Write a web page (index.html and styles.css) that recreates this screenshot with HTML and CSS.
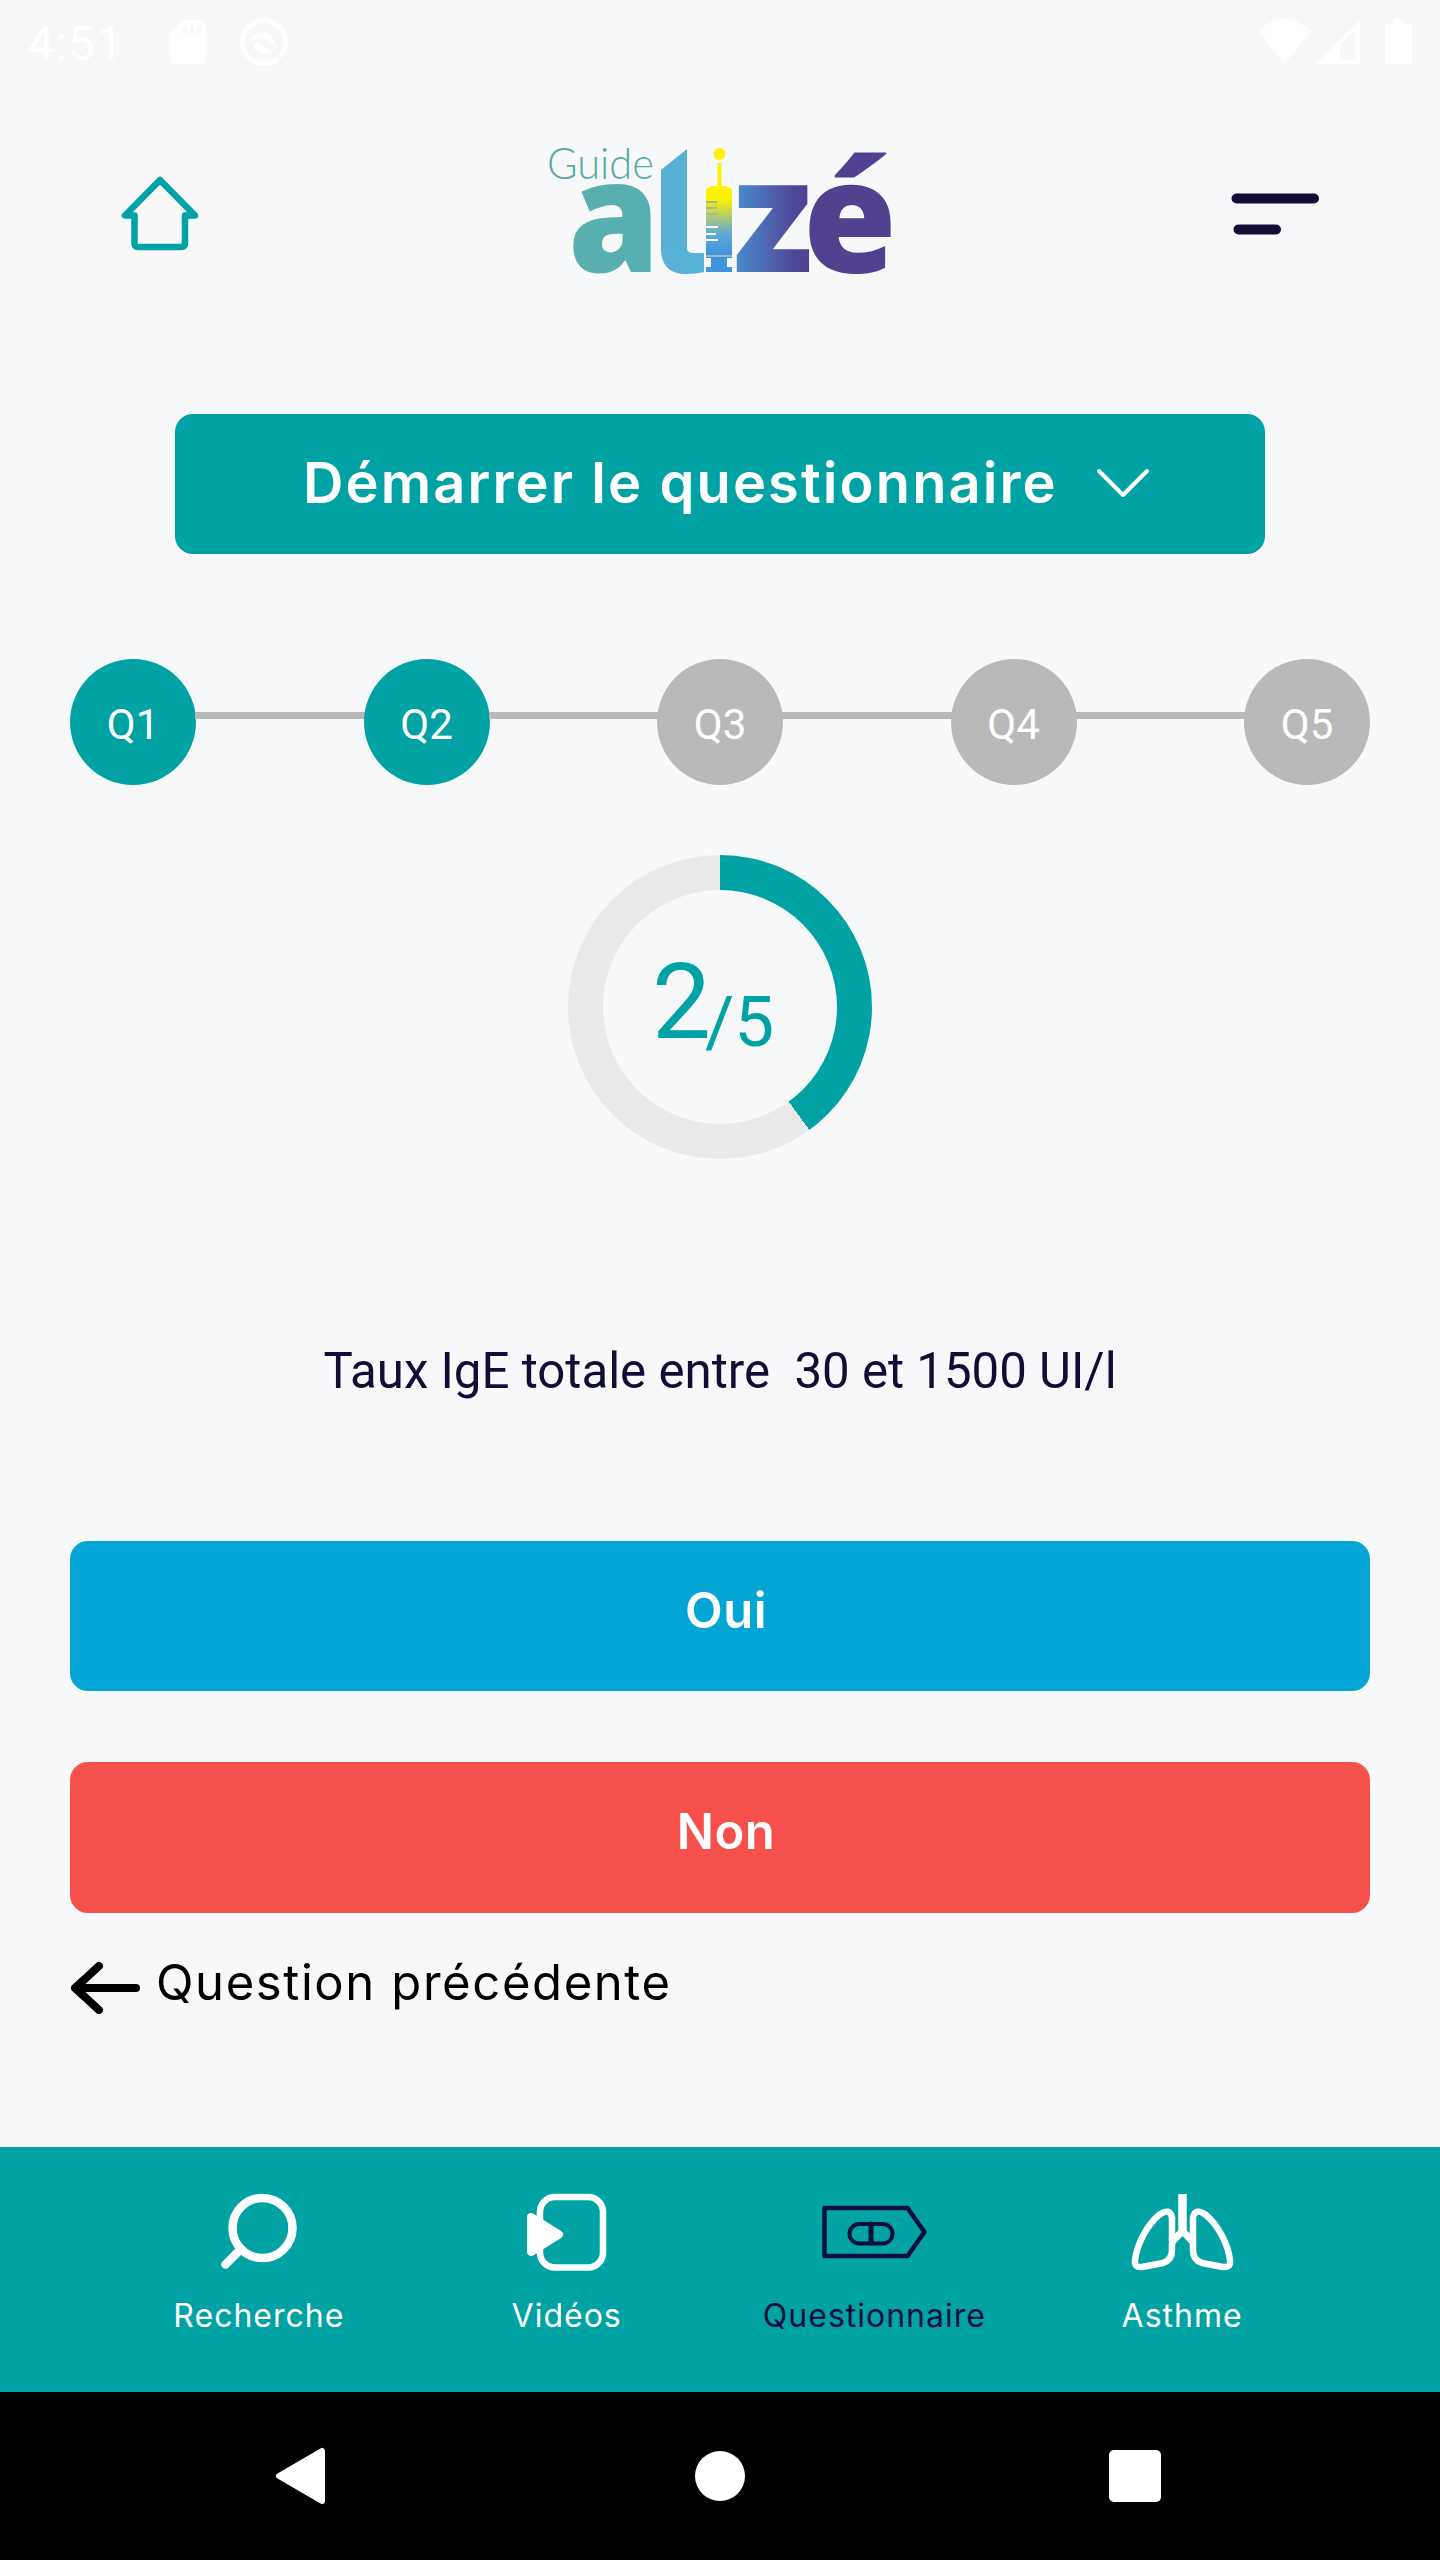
FILE: index.html
```html
<!DOCTYPE html>
<html lang="fr">

<head>
    <meta charset="UTF-8">
    <title>Guide Alizé</title>
    <link rel="stylesheet" href="styles.css">
</head>

<body>
    <div class="statusbar">
        <span class="heure">4:51</span>
        <svg class="iconSd" width="36" height="44" viewBox="0 0 36 44">
            <path fill="#fff" d="M13 0H31Q36 0 36 5V39Q36 44 31 44H5Q0 44 0 39V12Z" />
            <path stroke="#f7f8fa" stroke-width="4" d="M15 5V13M22 5V13M29 5V13" />
        </svg>
        <svg class="iconSync" width="50" height="50" viewBox="0 0 50 50">
            <circle cx="25" cy="25" r="21.5" fill="none" stroke="#fff" stroke-width="5" />
            <path fill="#fff" d="M12 21A14 14 0 0 1 37 31L26 23Q19 18 12 25ZM14 27Q18 23 23 27L33 36A14 14 0 0 1 14 27Z" />
            <path stroke="#f7f8fa" stroke-width="3" d="M36 38L43 44" />
        </svg>
        <svg class="iconReseau" width="155" height="46" viewBox="0 0 155 46">
            <path fill="#fff" d="M0 12Q26 -12 53 12L26.5 45Z" />
            <path fill="#fff" fill-rule="evenodd" d="M57 45L102 1V45ZM82 26V41H97V12Z" />
            <path fill="#fff" d="M135 0H146V5H154V45H127V5H135Z" />
        </svg>
    </div>

    <header class="header">
        <svg class="iconHome" width="80" height="76" viewBox="0 0 80 76">
            <path d="M40 4L5 39.5H14.5V67Q14.5 71 18 71H61Q65 71 65 67V39.5H75Z" />
        </svg>
        <svg class="logo" width="350" height="140" viewBox="0 0 350 140">
            <defs>
                <linearGradient id="degradeA"><stop offset="0" stop-color="#59b0ad" /><stop offset="1" stop-color="#58afb3" /></linearGradient>
                <linearGradient id="degradeZ"><stop offset="0" stop-color="#4a8fd0" /><stop offset="0.75" stop-color="#50489a" /><stop offset="1" stop-color="#51418f" /></linearGradient>
                <linearGradient id="degradeI" x1="0" y1="0" x2="0" y2="1"><stop offset="0.15" stop-color="#fff200" /><stop offset="0.55" stop-color="#62a9d6" /><stop offset="0.8" stop-color="#3e94df" /></linearGradient>
                <clipPath id="coupeL"><path d="M117 30L143 9V110H117Z" /></clipPath>
            </defs>
            <text class="logoGuide" x="3" y="39" textLength="107" lengthAdjust="spacingAndGlyphs">Guide</text>
            <text class="logoLettre" x="24" y="132" textLength="92" lengthAdjust="spacingAndGlyphs" fill="url(#degradeA)">a</text>
            <g clip-path="url(#coupeL)"><text class="logoLettre logoL" x="101" y="136" textLength="58" lengthAdjust="spacingAndGlyphs" fill="#58b1d4">l</text></g>
            <path fill="#58b1d8" d="M117 108H143Q143 113 149 113H160V132Q152 134 142 134Q117 134 117 108Z" />
            <circle cx="175.500" cy="14" r="6" fill="#fff200" />
            <path fill="#fff200" d="M173.500 23H177.500V46H173.500Z" />
            <path fill="url(#degradeI)" d="M162 49L168 46H182L188 49V118H183V127H188V132H162V127H167V118H162Z" />
            <path stroke="#f7f8fa" stroke-width="2" d="M162 87H174M162 94H172M162 100H174" />
            <path stroke="#a5b8a5" stroke-width="2" d="M162 62H173M162 68H173M162 74H173M162 80H173M162 116H188" />
            <text class="logoLettre" x="189" y="132" textLength="80" lengthAdjust="spacingAndGlyphs" fill="url(#degradeZ)">z</text>
            <text class="logoLettre" x="259" y="132" textLength="94" lengthAdjust="spacingAndGlyphs" fill="#51418f">é</text>
        </svg>
        <svg class="iconMenu" width="90" height="44" viewBox="0 0 90 44">
            <path d="M5.500 5.500H83M7.500 36.500H45" />
        </svg>
    </header>

    <button class="btnDemarrer">
        <span class="demarrerTexte">Démarrer le questionnaire</span>
        <svg width="54" height="32" viewBox="0 0 54 32">
            <path d="M3 4L27 28L51 4" />
        </svg>
    </button>

    <div class="etapes">
        <div class="etape active">Q1</div>
        <div class="trait"></div>
        <div class="etape active">Q2</div>
        <div class="trait"></div>
        <div class="etape">Q3</div>
        <div class="trait"></div>
        <div class="etape">Q4</div>
        <div class="trait"></div>
        <div class="etape">Q5</div>
    </div>

    <div class="progression">
        <div class="compteur"><span class="numero">2</span><span class="total">/5</span></div>
    </div>

    <p class="question">Taux IgE totale entre&nbsp; 30 et 1500 UI/l</p>

    <div class="reponses">
        <button class="btnReponse btnOui">Oui</button>
        <button class="btnReponse btnNon">Non</button>
    </div>

    <a class="precedente">
        <svg width="72" height="54" viewBox="0 0 72 54">
            <path d="M66 28H5M29 6L5 28L29 50" />
        </svg>
        <span>Question précédente</span>
    </a>

    <nav class="menu">
        <a class="lien">
            <svg width="110" height="80" viewBox="0 0 110 80">
                <circle cx="58.500" cy="35" r="30" stroke-width="8.500" />
                <path d="M37 56L21.500 71.500" stroke-width="8.500" />
            </svg>
            <span>Recherche</span>
        </a>
        <a class="lien">
            <svg width="110" height="80" viewBox="0 0 110 80">
                <rect x="28" y="4" width="63" height="70.500" rx="15" stroke-width="6.500" />
                <path d="M19 24L47 41.500L19 59Z" stroke-width="8" fill="#fff" />
            </svg>
            <span>Vidéos</span>
        </a>
        <a class="lien lienActif">
            <svg width="110" height="80" viewBox="0 0 110 80">
                <path d="M5.500 15H88.500L105.500 39L88.500 63H5.500Z" stroke-width="4.500" />
                <rect x="30.500" y="31" width="43" height="19.500" rx="9.750" stroke-width="4" />
                <path d="M52 31V50" stroke-width="5" />
            </svg>
            <span>Questionnaire</span>
        </a>
        <a class="lien">
            <svg width="110" height="80" viewBox="0 0 110 80">
                <path d="M55.500 1V39" stroke-width="8.500" stroke-linecap="butt" />
                <path d="M44 50L55.500 38L67 50" stroke-width="7" stroke-linecap="butt" />
                <path d="M45 25V57Q45 67 36 70L15 74Q7 75 8 67C10 51 20 32 32 22Q43 14 45 25Z" stroke-width="6.500" />
                <path d="M66 25V57Q66 67 75 70L96 74Q104 75 103 67C101 51 91 32 79 22Q68 14 66 25Z" stroke-width="6.500" />
            </svg>
            <span>Asthme</span>
        </a>
    </nav>

    <div class="navAndroid">
        <svg width="50" height="58" viewBox="0 0 50 58">
            <path fill="#fff" stroke="#fff" stroke-width="6" stroke-linejoin="round" d="M46 4V54L3 29Z" />
        </svg>
        <div class="rond"></div>
        <div class="carre"></div>
    </div>
</body>

</html>
```

FILE: styles.css
```css
* {
    box-sizing: border-box;
}

body {
    margin: 0;
    width: 1440px;
    height: 2560px;
    display: flex;
    flex-direction: column;
    background-color: #f7f8fa;
    font-family: Roboto, sans-serif;
    overflow: hidden;
}

button {
    border: none;
    color: white;
    font-family: Inter, sans-serif;
    font-weight: 600;
}

svg {
    flex: none;
}

.statusbar {
    height: 84px;
    padding: 0 27px;
    display: flex;
    align-items: center;
    color: white;
}

.heure {
    width: 143px;
    font-size: 49px;
    letter-spacing: 0.6px;
    line-height: 84px;
    padding-top: 4px;
}

.iconSync {
    margin-left: 33px;
}

.iconReseau {
    margin-left: auto;
}

.header {
    height: 330px;
    padding: 56px 119px 0 120px;
    display: flex;
    align-items: flex-start;
}

.iconHome {
    margin-top: 36px;
    fill: none;
    stroke: #00a2a4;
    stroke-width: 6.5;
    stroke-linejoin: round;
}

.logo {
    margin-left: 344px;
}

.logoGuide {
    font-family: Lato, sans-serif;
    font-weight: 300;
    font-size: 43px;
    fill: #58aaa7;
}

.logoLettre {
    font-family: "Open Sans", sans-serif;
    font-weight: 800;
    font-size: 156px;
}

.logoL {
    font-size: 176px;
}

.iconMenu {
    margin-top: 53px;
    margin-left: auto;
    stroke: #110d35;
    stroke-width: 10;
    stroke-linecap: round;
}

.btnDemarrer {
    width: 1090px;
    height: 140px;
    margin: 0 auto;
    padding: 0 115px 2px 128px;
    display: flex;
    justify-content: space-between;
    align-items: center;
    background-color: #00a2a4;
    border-radius: 18px;
    font-size: 56px;
}

.btnDemarrer svg {
    fill: none;
    stroke: white;
    stroke-width: 4;
    stroke-linecap: round;
    stroke-linejoin: round;
}

.demarrerTexte {
    letter-spacing: 2.1px;
    padding-bottom: 1px;
}

.etapes {
    margin: 105px 70px 0;
    display: flex;
    align-items: center;
}

.etape {
    width: 126px;
    height: 126px;
    border-radius: 50%;
    background-color: #b9b9b9;
    color: white;
    font-size: 42px;
    line-height: 131px;
    text-align: center;
}

.active {
    background-color: #00a2a4;
}

.trait {
    flex: 1;
    height: 7px;
    margin: 0 -1px 13px;
    background-color: #b9b9b9;
}

.progression {
    width: 304px;
    height: 304px;
    margin: 70px auto 0;
    padding: 35px;
    border-radius: 50%;
    background: conic-gradient(#00a2a4 40%, #e9e9e9 40%);
}

.compteur {
    height: 234px;
    padding: 51px 0 0 49px;
    border-radius: 50%;
    background-color: #f7f8fa;
    color: #00a2a4;
    display: flex;
}

.numero {
    font-size: 105px;
    line-height: 124px;
    margin-right: -6px;
}

.total {
    font-size: 71px;
    line-height: 162px;
}

.question {
    margin: 183px 0 0;
    text-align: center;
    color: #110d35;
    font-size: 49.2px;
    line-height: 58px;
}

.reponses {
    margin: 141px 70px 0;
    display: flex;
    flex-direction: column;
    gap: 71px;
}

.btnReponse {
    height: 150px;
    padding: 0 0 12px 12px;
    border-radius: 18px;
    font-size: 49px;
    letter-spacing: 0.5px;
}

.btnOui {
    background-color: #03a5d5;
}

.btnNon {
    height: 151px;
    background-color: #f5504b;
}

.precedente {
    margin: 41px 70px 0;
    display: flex;
    align-items: center;
    gap: 14px;
    font-family: Inter, sans-serif;
    font-size: 49px;
    line-height: 58px;
    letter-spacing: 1.6px;
}

.precedente span {
    padding-bottom: 8px;
}

.precedente svg {
    fill: none;
    stroke: black;
    stroke-width: 8;
    stroke-linecap: round;
    stroke-linejoin: round;
}

.menu {
    height: 245px;
    margin-top: auto;
    padding: 46px 104px 0 105px;
    display: grid;
    grid-template-columns: repeat(4, 1fr);
    background-color: #00a2a4;
    color: white;
    font-family: Inter, sans-serif;
    font-size: 32px;
    letter-spacing: 1px;
}

.lien {
    display: flex;
    flex-direction: column;
    align-items: center;
    gap: 23px;
}

.lien svg {
    fill: none;
    stroke: currentColor;
    stroke-linecap: round;
    stroke-linejoin: round;
}

.lienActif {
    color: #0b0f3c;
}

.navAndroid {
    height: 168px;
    padding: 0 279px 0 276px;
    display: flex;
    align-items: center;
    justify-content: space-between;
    background-color: black;
}

.rond {
    width: 50px;
    height: 50px;
    margin-left: 4px;
    border-radius: 50%;
    background-color: white;
}

.carre {
    width: 52px;
    height: 52px;
    border-radius: 5px;
    background-color: white;
}
```
